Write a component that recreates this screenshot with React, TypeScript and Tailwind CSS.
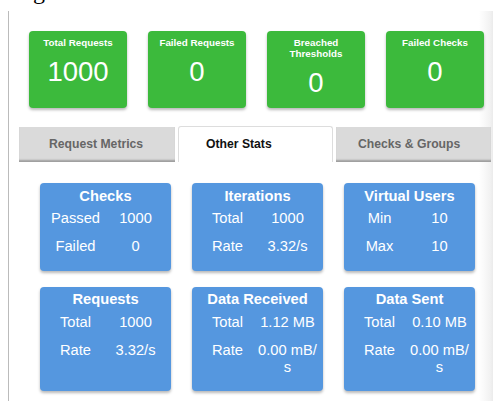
import React from "react";

type Stat = { label: string; value: string };
type StatCard = { title: string; rows: Stat[] };

const summary = [
  { title: "Total Requests", value: "1000" },
  { title: "Failed Requests", value: "0" },
  { title: "Breached Thresholds", value: "0" },
  { title: "Failed Checks", value: "0" },
];

const stats: StatCard[] = [
  { title: "Checks", rows: [{ label: "Passed", value: "1000" }, { label: "Failed", value: "0" }] },
  { title: "Iterations", rows: [{ label: "Total", value: "1000" }, { label: "Rate", value: "3.32/s" }] },
  { title: "Virtual Users", rows: [{ label: "Min", value: "10" }, { label: "Max", value: "10" }] },
  { title: "Requests", rows: [{ label: "Total", value: "1000" }, { label: "Rate", value: "3.32/s" }] },
  { title: "Data Received", rows: [{ label: "Total", value: "1.12 MB" }, { label: "Rate", value: "0.00 mB/s" }] },
  { title: "Data Sent", rows: [{ label: "Total", value: "0.10 MB" }, { label: "Rate", value: "0.00 mB/s" }] },
];

function SummaryBox({ title, value }: { title: string; value: string }) {
  return (
    <div className="flex h-[77px] w-[98px] flex-col items-center rounded-[4px] bg-[#3cba3c] px-[6px] pt-[5.5px] text-center text-white shadow-[0_2px_3px_rgba(0,0,0,0.28)]">
      <div className="text-[9.8px] font-bold leading-[11px]">{title}</div>
      <div className="mt-[8.5px] text-[27.5px] leading-[32px]">{value}</div>
    </div>
  );
}

function StatBox({ title, rows }: StatCard) {
  return (
    <div className="rounded-[4px] bg-[#5597df] pb-[10px] pt-[4.5px] text-white shadow-[0_2px_3px_rgba(0,0,0,0.28)]">
      <div className="text-center text-[14.7px] font-bold leading-[17px]">{title}</div>
      <div className="grid grid-cols-[60px_60px] justify-center text-[14.7px] leading-[17px]">
        {rows.map((r) => (
          <React.Fragment key={r.label}>
            <div className="py-[5.5px] text-center">{r.label}</div>
            <div className="break-all py-[5.5px] text-center">{r.value}</div>
          </React.Fragment>
        ))}
      </div>
    </div>
  );
}

export default function App() {
  return (
    <div className="min-h-[401px] overflow-hidden bg-white font-['Liberation_Sans',Arial,sans-serif]">
      {/* tail of the page heading above */}
      <div className="h-[11px] overflow-hidden pl-[33px]">
        <div className="mt-[-21px] font-['Liberation_Serif',serif] text-[24px] leading-[24px] text-black">g</div>
      </div>

      <div className="ml-[8px] min-h-[390px] border-l border-[#bbbbbb] bg-[linear-gradient(90deg,#ffffff_470px,#f2f2f2_481px,#ebebeb)] pt-[20px]">
        <div className="flex gap-[21px] pl-[20px]">
          {summary.map((s) => (
            <SummaryBox key={s.title} title={s.title} value={s.value} />
          ))}
        </div>

        <div className="ml-[10px] mt-[18px] flex items-end gap-[3px] text-[12.2px] font-bold">
          <div className="flex h-[35px] w-[156px] items-center bg-[#dadada] pl-[30px] text-[#666666] shadow-[inset_0_-3px_2px_-1px_rgba(0,0,0,0.28)]">
            Request Metrics
          </div>
          <div className="flex h-[36px] w-[155px] items-center rounded-t-[3px] border border-b-0 border-[#dddddd] bg-white pl-[27px] text-[#111111]">
            Other Stats
          </div>
          <div className="flex h-[35px] w-[155px] items-center bg-[#dadada] pl-[22px] text-[#666666] shadow-[inset_0_-3px_2px_-1px_rgba(0,0,0,0.28)]">
            Checks &amp; Groups
          </div>
        </div>

        <div className="ml-[31px] mt-[21px] grid grid-cols-[131px_131px_131px] gap-x-[21px] gap-y-[16px] pb-[10px]">
          {stats.map((s) => (
            <StatBox key={s.title} title={s.title} rows={s.rows} />
          ))}
        </div>
      </div>
    </div>
  );
}
